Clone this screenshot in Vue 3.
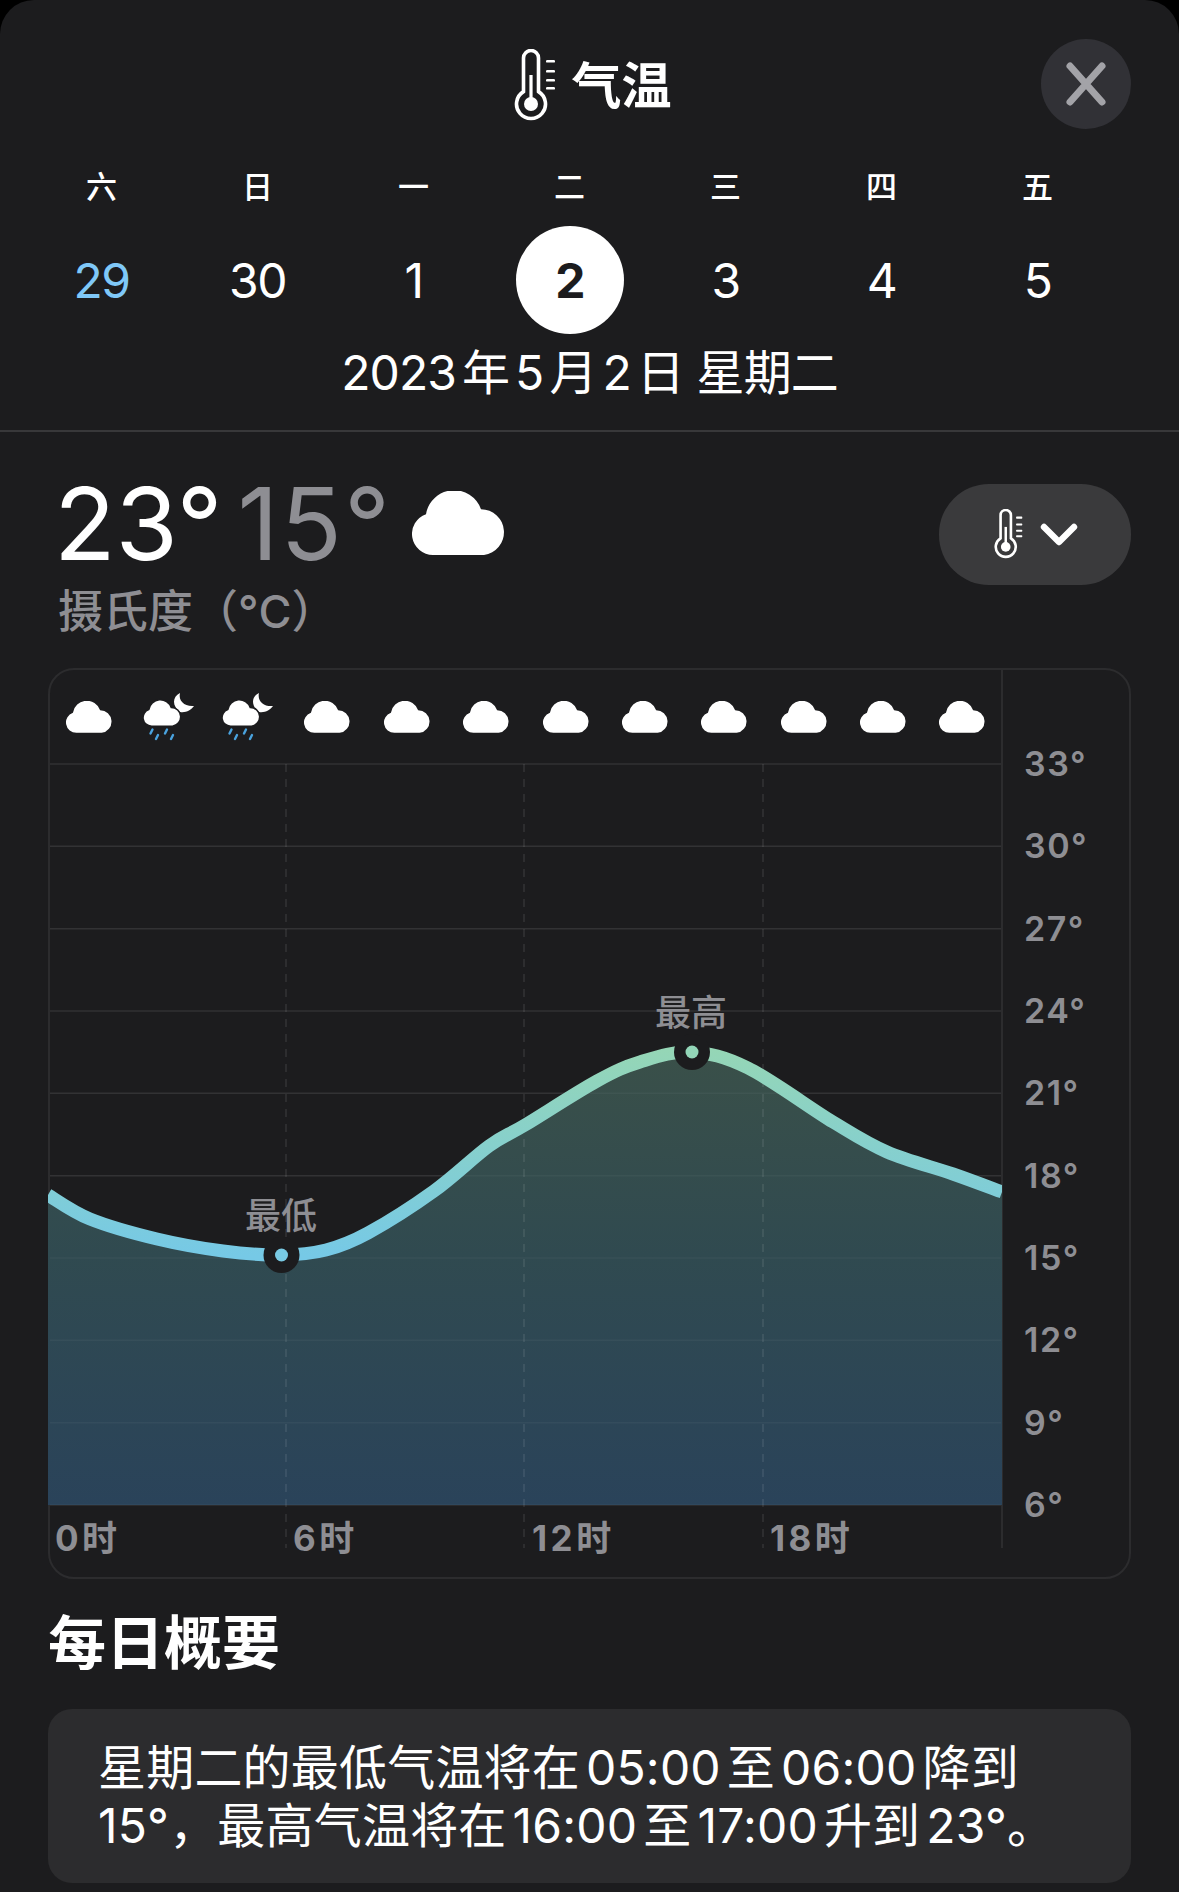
<script setup>
const days = [
  { week: '六', date: '29', tone: 'past' },
  { week: '日', date: '30' },
  { week: '一', date: '1' },
  { week: '二', date: '2', tone: 'active' },
  { week: '三', date: '3' },
  { week: '四', date: '4' },
  { week: '五', date: '5' },
  { week: '六', date: '' }
]

const hourIcons = ['cloud', 'rain', 'rain', 'cloud', 'cloud', 'cloud', 'cloud', 'cloud', 'cloud', 'cloud', 'cloud', 'cloud']

// y position of each axis label, 3 degrees apart
const axis = [33, 30, 27, 24, 21, 18, 15, 12, 9, 6].map((t, i) => ({ t, y: 764 + i * 82.33 }))
const hours = [
  { label: '0时', x: 55, line: null },
  { label: '6时', x: 293, line: 286 },
  { label: '12时', x: 532, line: 524 },
  { label: '18时', x: 770, line: 763 }
]

const points = [
  [48, 1195], [90, 1219], [157, 1239], [223, 1251], [281, 1255], [326, 1250], [368, 1233],
  [434, 1191], [489, 1146], [525, 1125], [597, 1081], [640, 1062], [691, 1052], [748, 1068],
  [833, 1122], [887, 1152], [953, 1174], [1002, 1192]
]

// smooth the points with catmull-rom
const smooth = (pts) => {
  let d = `M${pts[0][0]} ${pts[0][1]}`
  for (let i = 0; i < pts.length - 1; i++) {
    const p0 = pts[i - 1] || pts[i]
    const p1 = pts[i]
    const p2 = pts[i + 1]
    const p3 = pts[i + 2] || p2
    const c1x = p1[0] + (p2[0] - p0[0]) / 6
    const c1y = p1[1] + (p2[1] - p0[1]) / 6
    const c2x = p2[0] - (p3[0] - p1[0]) / 6
    const c2y = p2[1] - (p3[1] - p1[1]) / 6
    d += ` C${c1x} ${c1y} ${c2x} ${c2y} ${p2[0]} ${p2[1]}`
  }
  return d
}

const linePath = smooth(points)
const areaPath = `${linePath} L1002 1505 L48 1505 Z`
const cloudPath = 'M21 64A21 21 0 0 1 14 23.2A28.5 28.5 0 0 1 69 18.2A23 23 0 0 1 72 64Z'
const thermoPath = 'M9.5 42.6V9a7.5 7.5 0 0 1 15 0V42.6A14.5 14.5 0 1 1 9.5 42.6Z'
const ticks = [11, 21, 30, 38]
</script>

<template>
  <div class="sheet">
    <header class="header">
      <span></span>
      <h1 class="title">
        <svg class="thermo" viewBox="0 0 42 74">
          <path :d="thermoPath" fill="none" stroke="#fff" stroke-width="3.6" />
          <circle cx="17" cy="55" r="7" fill="#fff" />
          <rect x="15.4" y="26" width="3.2" height="29" fill="#fff" />
          <rect v-for="y in ticks" :key="y" x="32" :y="y" width="9" height="2.6" rx="1.2" fill="#fff" />
        </svg>
        气温
      </h1>
      <button class="close" type="button" aria-label="关闭">
        <svg viewBox="0 0 48 48" width="48" height="48">
          <path d="M8 6L40 42M40 6L8 42" stroke="#a3a3a8" stroke-width="7" stroke-linecap="round" />
        </svg>
      </button>
    </header>

    <div class="week">
      <div v-for="(d, i) in days" :key="i" class="day">
        <span class="weekday">{{ d.week }}</span>
        <span class="date" :class="d.tone">{{ d.date }}</span>
      </div>
    </div>
    <p class="full-date">2023年5月2日 星期二</p>

    <main class="content">
      <section class="now">
        <div>
          <div class="temps">
            <span class="hi">23°</span>
            <span class="lo">15°</span>
            <svg class="big-cloud" viewBox="0 0 95 64"><path :d="cloudPath" fill="#fff" /></svg>
          </div>
          <div class="unit">摄氏度（°C）</div>
        </div>
        <button class="picker" type="button">
          <svg class="thermo-small" viewBox="0 0 42 74">
            <path :d="thermoPath" fill="none" stroke="#fff" stroke-width="3.8" />
            <circle cx="17" cy="55" r="7" fill="#fff" />
            <rect x="15.2" y="26" width="3.6" height="29" fill="#fff" />
            <rect v-for="y in ticks" :key="y" x="32" :y="y" width="9" height="3" rx="1" fill="#fff" />
          </svg>
          <svg viewBox="0 0 38 24" width="38" height="24">
            <path d="M4 4L19 19L34 4" fill="none" stroke="#fff" stroke-width="6.4" stroke-linecap="round" stroke-linejoin="round" />
          </svg>
        </button>
      </section>

      <section class="chart-box">
        <div class="hour-icons">
          <div v-for="(icon, i) in hourIcons" :key="i" class="hour-icon">
            <svg v-if="icon === 'cloud'" viewBox="0 0 95 64" width="47" height="32">
              <path :d="cloudPath" fill="#fff" />
            </svg>
            <svg v-else viewBox="0 0 52 52" width="52" height="52">
              <path d="M37 2C29 6 29 15 37 21C43 22 48 19 51 15C42 16 35 10 37 2Z" fill="#fff" />
              <g transform="translate(0 9) scale(0.41)">
                <path :d="cloudPath" fill="#fff" stroke="#1c1c1e" stroke-width="4" />
              </g>
              <path d="M9.5 38.5L7.5 42.5M15 44L13 48M24 38.5L22 42.5M30 44L28 48" stroke="#4aa3df" stroke-width="2.4" stroke-linecap="round" />
            </svg>
          </div>
        </div>

        <svg class="chart" viewBox="50 764 1079 812">
          <defs>
            <linearGradient id="lineGrad" gradientUnits="userSpaceOnUse" x1="0" y1="1050" x2="0" y2="1256">
              <stop offset="0" stop-color="#95d6b6" />
              <stop offset="1" stop-color="#76c9e6" />
            </linearGradient>
            <linearGradient id="areaGrad" gradientUnits="userSpaceOnUse" x1="0" y1="1050" x2="0" y2="1505">
              <stop offset="0" stop-color="#3a5049" />
              <stop offset="0.45" stop-color="#304a50" />
              <stop offset="1" stop-color="#2a435a" />
            </linearGradient>
            <clipPath id="plotClip">
              <rect x="48" y="764" width="954" height="741" />
            </clipPath>
          </defs>

          <line x1="1002" y1="764" x2="1002" y2="1548" class="axis-line" />
          <line v-for="a in axis" :key="a.t" x1="50" :y1="a.y" x2="1001" :y2="a.y" class="grid-line" />

          <path :d="areaPath" fill="url(#areaGrad)" />
          <line v-for="a in axis" :key="'o' + a.t" x1="50" :y1="a.y" x2="1001" :y2="a.y" class="grid-over" />
          <line v-for="h in hours.filter((h) => h.line)" :key="h.label" :x1="h.line" y1="764" :x2="h.line" y2="1548" class="dash" />

          <path :d="linePath" fill="none" stroke="url(#lineGrad)" stroke-width="13" clip-path="url(#plotClip)" />

          <circle cx="281.5" cy="1255" r="18" fill="#1c1c1e" />
          <circle cx="281.5" cy="1255" r="6.5" fill="#79cae4" />
          <circle cx="692" cy="1052" r="18" fill="#1c1c1e" />
          <circle cx="692" cy="1052" r="6.5" fill="#93d6b8" />

          <text x="281" y="1229" class="mark">最低</text>
          <text x="691" y="1026" class="mark">最高</text>

          <text v-for="a in axis" :key="'t' + a.t" x="1024" :y="a.y + 12" class="tick">{{ a.t }}°</text>
          <text v-for="h in hours" :key="'h' + h.label" :x="h.x" y="1551" class="tick hour">{{ h.label }}</text>
        </svg>
      </section>

      <h2 class="summary-title">每日概要</h2>
      <p class="summary">星期二的最低气温将在05:00至06:00降到15°，最高气温将在16:00至17:00升到23°。</p>
    </main>
  </div>
</template>

<style>
html,
body {
  margin: 0;
  background: #000;
}
</style>

<style scoped>
.sheet {
  width: 1179px;
  height: 1892px;
  overflow: hidden;
  box-sizing: border-box;
  padding-top: 39px;
  background: #1c1c1e;
  border-radius: 34px 34px 0 0;
  color: #fff;
  font-family: Inter, "Noto Sans CJK SC", sans-serif;
}

.header {
  display: grid;
  grid-template-columns: 1fr auto 1fr;
  align-items: center;
  height: 90px;
  padding: 0 48px;
}

.title {
  display: flex;
  align-items: center;
  gap: 16px;
  margin: 3px 0 0 6px;
  font-size: 50px;
  font-weight: 600;
  line-height: 1;
}

.thermo {
  width: 42px;
  height: 74px;
}

.close {
  justify-self: end;
  display: flex;
  align-items: center;
  justify-content: center;
  width: 90px;
  height: 90px;
  padding: 0;
  border: none;
  border-radius: 50%;
  background: #313136;
}

.week {
  display: grid;
  grid-template-columns: repeat(8, 156px);
  margin: 38px 0 0 23.5px;
}

.day {
  display: flex;
  flex-direction: column;
  align-items: center;
}

.weekday {
  height: 40px;
  font-size: 31px;
  font-weight: 500;
  line-height: 40px;
}

.date {
  display: flex;
  align-items: center;
  justify-content: center;
  width: 108px;
  height: 108px;
  margin-top: 19px;
  border-radius: 50%;
  font-size: 48px;
  letter-spacing: -1.5px;
}

.date.past {
  color: #7fc8f8;
}

.date.active {
  background: #fff;
  color: #1c1c1e;
  font-weight: 700;
}

.full-date {
  height: 58px;
  margin: 10px 0 0;
  padding-bottom: 28px;
  border-bottom: 2px solid #38383a;
  font-size: 48px;
  letter-spacing: -0.9px;
  line-height: 58px;
  text-align: center;
  text-autospace: normal;
}

.content {
  padding: 41px 48px 0;
}

.now {
  display: flex;
  justify-content: space-between;
  align-items: flex-start;
}

.temps {
  display: flex;
  align-items: center;
  height: 100px;
  padding-left: 6px;
  font-size: 101px;
  line-height: 100px;
}

.lo {
  margin-left: 15px;
  color: #8e8e93;
  letter-spacing: 2px;
}

.big-cloud {
  width: 95px;
  height: 64px;
  margin: 0 0 0 20px;
}

.unit {
  margin: 11px 0 0 10px;
  color: #8e8e93;
  font-size: 45px;
  font-weight: 500;
  line-height: 56px;
}

.picker {
  display: flex;
  align-items: center;
  gap: 17px;
  box-sizing: border-box;
  width: 192px;
  height: 101px;
  margin-top: 11px;
  padding: 0 0 0 55px;
  border: none;
  border-radius: 50px;
  background: #3a3a3c;
}

.thermo-small {
  width: 29px;
  height: 51px;
}

.chart-box {
  width: 1083px;
  height: 911px;
  box-sizing: border-box;
  margin-top: 28px;
  border: 2px solid #2c2c2e;
  border-radius: 26px;
}

.hour-icons {
  display: grid;
  grid-template-columns: repeat(12, 79.4px);
  box-sizing: border-box;
  width: 953px;
  height: 94px;
  border-right: 2px solid #2c2c2e;
}

.hour-icon {
  display: flex;
  align-items: center;
  justify-content: center;
}

.chart {
  display: block;
  width: 1079px;
  height: 812px;
  overflow: visible;
}

.axis-line {
  stroke: #2c2c2e;
  stroke-width: 2;
}

.grid-line {
  stroke: #2a2a2c;
  stroke-width: 1.5;
}

.grid-over {
  stroke: rgba(255, 255, 255, 0.04);
  stroke-width: 1.5;
}

.dash {
  stroke: rgba(255, 255, 255, 0.08);
  stroke-width: 2;
  stroke-dasharray: 8 7;
}

.tick {
  fill: #8e8e93;
  font-size: 34px;
  font-weight: 600;
  letter-spacing: 1.5px;
}

.tick.hour {
  font-size: 35px;
  font-weight: 700;
  letter-spacing: 3.5px;
}

.mark {
  fill: #8e8e93;
  font-size: 36px;
  font-weight: 500;
  text-anchor: middle;
}

.summary-title {
  margin: 29px 0 0;
  font-size: 58px;
  font-weight: 700;
  line-height: 70px;
}

.summary {
  box-sizing: border-box;
  height: 174px;
  margin: 31px 0 0;
  padding: 30px 50px 0;
  border-radius: 24px;
  background: #2c2c2e;
  font-size: 48px;
  letter-spacing: 0.2px;
  line-height: 58px;
  text-autospace: normal;
}
</style>
